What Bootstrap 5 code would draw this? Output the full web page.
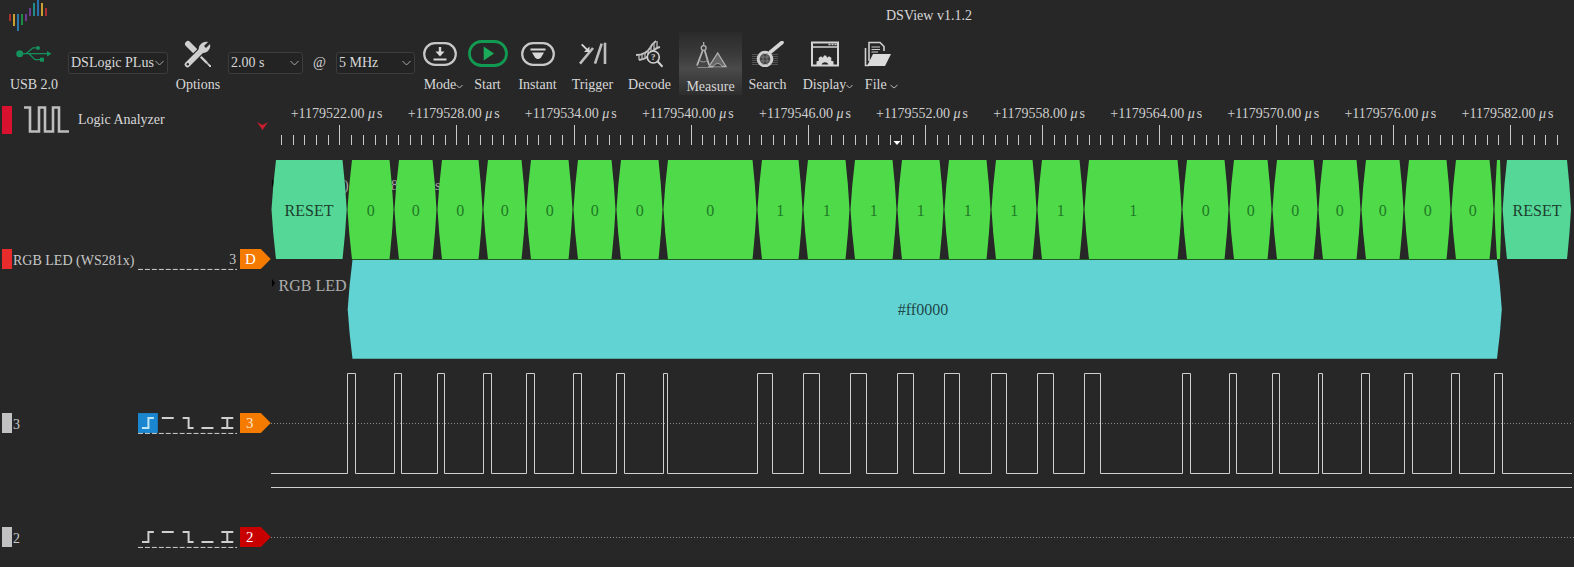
<!DOCTYPE html>
<html>
<head>
    <meta charset="UTF-8">
    <title>DSView v1.1.2</title>
    <link href="https://cdn.jsdelivr.net/npm/bootstrap@5.3.0/dist/css/bootstrap.min.css" rel="stylesheet">
    <style>
        html, body { height: 100%; }
        body {
            background: #272727;
            color: #d8d8d8;
            font-family: "Liberation Serif", serif;
            font-size: 14px;
            overflow: hidden;
        }
        svg { display: block; }
        .title-row { height: 30px; }
        .app-title { margin-left: 838px; line-height: 32px; }

        .tool-row {
            display: grid;
            grid-template-columns: 68px 100px 60px 75px 33px 79px 50px 45px 55px 55px 59px 63px 51px 63px 44px;
            height: 68px;
        }
        .tool { display: flex; flex-direction: column; align-items: center; }
        .tool-ic { height: 47px; display: flex; align-items: center; justify-content: center; }
        .tool-lb { line-height: 16px; white-space: nowrap; display: flex; align-items: center; }
        .tool-on { background: linear-gradient(#2b2b2b 0%, #3a3a3a 35%, #4a4a4a 58%, #2d2d2d 100%); margin: 2px 0 5px; }
        .tool-on .tool-ic { height: 45px; }
        .tool-on .tool-lb { margin-top: 2px; }
        .chev { margin-top: 3px; margin-right: -7px; }

        .pick-cell { padding-top: 22px; }
        .pick-cell .form-select {
            height: 22px;
            min-height: 0;
            padding: 0 12px 0 2px;
            font-size: 14px;
            line-height: 20px;
            color: #d8d8d8;
            background-color: #232323;
            background-image: url("data:image/svg+xml,%3csvg xmlns='http://www.w3.org/2000/svg' viewBox='0 0 9 6'%3e%3cpath fill='none' stroke='%23aaa' d='M.5 1l4 4 4-4'/%3e%3c/svg%3e");
            background-position: right 3px center;
            background-size: 9px 6px;
            border: 1px solid #3c3c3c;
            border-radius: 3px;
            box-shadow: none;
        }
        .at-sign { padding-top: 22px; line-height: 22px; text-align: center; }

        .main-row { height: 469px; }
        .side-panel { width: 270px; flex: none; }
        .head-row { margin-top: 8px; height: 28px; }
        .mark-bar { width: 10px; margin-left: 2px; flex: none; }
        .mark-head { height: 28px; background: #d8112f; }
        .mark-rgb { height: 20px; background: #e82c2c; }
        .mark-ch { height: 20px; background: #c2c2c2; }
        .head-wave { margin-left: 12px; }
        .head-name { margin-left: 9px; margin-top: -1px; }
        .head-arrow { margin-left: auto; margin-right: 2px; margin-top: 16px; }
        .chan-row { height: 21px; }
        .chan-rgb { margin-top: 115px; }
        .chan-3 { margin-top: 143px; }
        .chan-2 { margin-top: 93px; }
        .chan-name { width: 126px; padding-left: 1px; padding-top: 2px; line-height: 20px; white-space: nowrap; color: #c8c8c8; flex: none; }
        .chan-tag { margin-left: 3px; margin-right: -1px; }
        .wave-box { flex: 1 1 auto; min-width: 0; }
    </style>
</head>
<body>
    <div class="container-fluid p-0">
        <!-- barra de titulo -->
        <div class="title-row d-flex">
            <svg width="48" height="31" viewBox="0 0 48 31">
                <g stroke-width="2">
                    <path d="M10 14V21" stroke="#a82f2f"/>
                    <path d="M14 14V26" stroke="#c9a032"/>
                    <path d="M18 14V31" stroke="#2a78ad"/>
                    <path d="M22 14V25" stroke="#1d8a45"/>
                    <path d="M26 14V21" stroke="#6b3c92"/>
                    <path d="M30 8V16" stroke="#6b3c92"/>
                    <path d="M34 3V16" stroke="#1f8b8b"/>
                    <path d="M38 0V16" stroke="#2a70b0"/>
                    <path d="M42 3V16" stroke="#c9a032"/>
                    <path d="M46 8V16" stroke="#a83030"/>
                </g>
            </svg>
            <div class="app-title">DSView v1.1.2</div>
        </div>

        <!-- barra de ferramentas -->
        <div class="tool-row">
            <div class="tool">
                <div class="tool-ic">
                    <svg width="38" height="20" viewBox="17 43 38 20">
                        <circle cx="21.7" cy="52.7" r="3.5" fill="#14915c"/>
                        <path d="M22 52.7H50M28 52.7L35 46.8H38M31 52.7L37 58.7H42" fill="none" stroke="#14915c" stroke-width="1.3"/>
                        <path d="M49 50L53.5 52.7L49 55.4Z" fill="#14915c"/>
                        <circle cx="40" cy="47" r="2" fill="#14915c"/>
                        <rect x="42" y="56.7" width="4" height="4" fill="#14915c"/>
                    </svg>
                </div>
                <div class="tool-lb">USB 2.0</div>
            </div>
            <div class="pick-cell">
                <select class="form-select"><option>DSLogic PLus</option></select>
            </div>
            <div class="tool">
                <div class="tool-ic">
                    <svg width="28" height="28" viewBox="0 0 28 28">
                        <path d="M4 4L10.5 10.5" stroke="#cfcfcf" stroke-width="6" stroke-linecap="round"/>
                        <path d="M9 9L23 23" stroke="#cfcfcf" stroke-width="2.4"/>
                        <path d="M21.5 21.5L26 27L27 26Z" fill="#cfcfcf" stroke="#cfcfcf"/>
                        <path d="M3 25L17.5 10.5" stroke="#272727" stroke-width="8"/>
                        <path d="M3.5 24.5L18 10" stroke="#cfcfcf" stroke-width="5.5" stroke-linecap="round"/>
                        <path d="M15 11.5C13.5 6 18 1 24 2L20 6L22 8L26 4C27.5 10 21.5 14.5 16.5 12.5Z" fill="#cfcfcf"/>
                        <circle cx="3.8" cy="24.2" r="1.2" fill="#272727"/>
                    </svg>
                </div>
                <div class="tool-lb">Options</div>
            </div>
            <div class="pick-cell">
                <select class="form-select"><option>2.00 s</option></select>
            </div>
            <div class="at-sign">@</div>
            <div class="pick-cell">
                <select class="form-select"><option>5 MHz</option></select>
            </div>
            <div class="tool">
                <div class="tool-ic">
                    <svg width="34" height="24" viewBox="0 0 34 24">
                        <rect x="1.2" y="1.2" width="31.6" height="21.6" rx="10.8" fill="none" stroke="#c8c8c8" stroke-width="2.2"/>
                        <path d="M17 5V11" stroke="#d8d8d8" stroke-width="2.4"/>
                        <path d="M12.5 9.5H21.5L17 14.5Z" fill="#d8d8d8"/>
                        <path d="M10.5 17.5H23.5" stroke="#d8d8d8" stroke-width="2"/>
                    </svg>
                </div>
                <div class="tool-lb">Mode<svg class="chev" width="7" height="5" viewBox="0 0 7 5"><path d="M.5 1L3.5 4L6.5 1" fill="none" stroke="#bbb"/></svg></div>
            </div>
            <div class="tool">
                <div class="tool-ic">
                    <svg width="40" height="27" viewBox="0 0 40 27">
                        <rect x="1.5" y="1.5" width="37" height="24" rx="12" fill="none" stroke="#139a52" stroke-width="2.8"/>
                        <path d="M15.7 6.5L26 13.5L15.7 20.5Z" fill="#1bab5b"/>
                    </svg>
                </div>
                <div class="tool-lb">Start</div>
            </div>
            <div class="tool">
                <div class="tool-ic">
                    <svg width="34" height="24" viewBox="0 0 34 24">
                        <rect x="1.2" y="1.2" width="31.6" height="21.6" rx="10.8" fill="none" stroke="#c8c8c8" stroke-width="2.2"/>
                        <path d="M9.5 6.5H24.5V8.5H9.5Z" fill="#d8d8d8"/>
                        <path d="M11 10.5H23L20 15.5Q17 18.5 14 15.5Z" fill="#d8d8d8"/>
                    </svg>
                </div>
                <div class="tool-lb">Instant</div>
            </div>
            <div class="tool">
                <div class="tool-ic">
                    <svg width="30" height="24" viewBox="578 41 30 24">
                        <path d="M580 62.7L593 47M595 62.7L601.7 42.7" stroke="#bdbdbd" stroke-width="2.6" fill="none"/>
                        <path d="M605 41.7V63" stroke="#bdbdbd" stroke-width="2.6"/>
                        <path d="M581.7 43.3L587 48.6" stroke="#d8d8d8" stroke-width="1.8"/>
                        <path d="M589.5 45.5V51H584Z" fill="#d8d8d8"/>
                    </svg>
                </div>
                <div class="tool-lb">Trigger</div>
            </div>
            <div class="tool">
                <div class="tool-ic">
                    <svg width="30" height="28" viewBox="636 39 30 28">
                        <path d="M637 54Q647 54 651 47Q653 43 657 40" fill="none" stroke="#c4c4c4" stroke-width="1.8"/>
                        <path d="M640 59Q648 58 652 52Q656 47 661 46" fill="none" stroke="#c4c4c4" stroke-width="1.8"/>
                        <path d="M640 54V59M643 53.5V59M646 52V58M649 49V56M652 46V52M655 42V48M658 40V46" stroke="#b0b0b0" stroke-width="1.4"/>
                        <circle cx="654.3" cy="56" r="6" fill="#272727" stroke="#d2d2d2" stroke-width="1.6"/>
                        <path d="M658.7 60.5L663.5 65.7" stroke="#d2d2d2" stroke-width="2"/>
                        <text x="654.3" y="59" text-anchor="middle" font-size="9" font-weight="700" fill="#d2d2d2">?</text>
                    </svg>
                </div>
                <div class="tool-lb">Decode</div>
            </div>
            <div class="tool tool-on">
                <div class="tool-ic">
                    <svg width="32" height="30" viewBox="694 39 32 30">
                        <path d="M702.7 41V45" stroke="#b5b5b5" stroke-width="1.2"/>
                        <circle cx="702.7" cy="47" r="2.4" fill="none" stroke="#b5b5b5" stroke-width="1.3"/>
                        <path d="M701.7 49.5L696 64.5M703.7 49.5L708 64" stroke="#b5b5b5" stroke-width="1.8" fill="none"/>
                        <path d="M698 59Q702 63 707 59" stroke="#a0a0a0" fill="none"/>
                        <path d="M708 65.5L716.7 52L725 65.5Z" fill="#666" stroke="#b0b0b0" stroke-width="1.3"/>
                        <path d="M712.5 65.5A4.5 4.5 0 0 1 721 65.5" fill="#3c3c3c" stroke="#a8a8a8"/>
                        <path d="M696.5 66.5H712" stroke="#8a8a8a"/>
                    </svg>
                </div>
                <div class="tool-lb">Measure</div>
            </div>
            <div class="tool">
                <div class="tool-ic">
                    <svg width="32" height="26" viewBox="752 40 32 26">
                        <g stroke="#7c7c7c" stroke-width="1" stroke-dasharray="1 1">
                            <path d="M752.5 53.5H778M752.5 55.5H778M752.5 57.5H778M752.5 59.5H778M752.5 61.5H778M752.5 63.5H778"/>
                        </g>
                        <path d="M770.5 51L782 41.5" stroke="#d4d4d4" stroke-width="3.6" stroke-linecap="round"/>
                        <circle cx="765" cy="58" r="6.8" fill="#444" stroke="#d0d0d0" stroke-width="3"/>
                        <path d="M760 56H770M760 60H770M763 52V64M767 52V64" stroke="#808080" stroke-width=".8"/>
                    </svg>
                </div>
                <div class="tool-lb">Search</div>
            </div>
            <div class="tool">
                <div class="tool-ic">
                    <svg width="30" height="26" viewBox="809 40 30 26">
                        <rect x="811" y="41.5" width="26" height="23" fill="none" stroke="#d4d4d4" stroke-width="2"/>
                        <path d="M811 46H837" stroke="#d4d4d4" stroke-width="1.5"/>
                        <path d="M827.5 43.5H829.5M830.5 43.5H832.5M833.5 43.5H835.5" stroke="#d4d4d4" stroke-width="1.6"/>
                        <path d="M815.5 64V60.5L818 59.5L817.5 57L820 55.2L821.8 56.8L823 54.5H825L826.2 56.8L828 55.2L830.5 57L830 59.5L832.5 60.5V64H827.5A3.6 3.6 0 0 0 820.5 64Z" fill="#d8d8d8"/>
                    </svg>
                </div>
                <div class="tool-lb">Display<svg class="chev" width="7" height="5" viewBox="0 0 7 5"><path d="M.5 1L3.5 4L6.5 1" fill="none" stroke="#bbb"/></svg></div>
            </div>
            <div class="tool">
                <div class="tool-ic">
                    <svg width="28" height="26" viewBox="862 40 28 26">
                        <path d="M867 60V41.5H878L882 45.5V50" fill="none" stroke="#cfcfcf" stroke-width="1.6"/>
                        <path d="M869.5 46H878M869.5 48.5H878M869.5 51H876" stroke="#cfcfcf" stroke-width="1.2"/>
                        <path d="M863.5 47V64.5H867" fill="none" stroke="#cfcfcf" stroke-width="1.6"/>
                        <path d="M871 53H889L883 65H865Z" fill="#dcdcdc"/>
                    </svg>
                </div>
                <div class="tool-lb">File&nbsp;<svg class="chev" width="8" height="5" viewBox="0 0 8 5"><path d="M.5 1L4 4L7.5 1" fill="none" stroke="#bbb"/></svg></div>
            </div>
        </div>

        <div class="main-row d-flex">
            <!-- painel de canais -->
            <div class="side-panel">
                <div class="head-row d-flex">
                    <div class="mark-bar mark-head"></div>
                    <svg class="head-wave" width="45" height="27" viewBox="0 0 45 27">
                        <path d="M0 1.5H6V25.5H15V1.5H21V25.5H29V1.5H35V25.5H45" fill="none" stroke="#bdbdbd" stroke-width="2.6"/>
                    </svg>
                    <div class="head-name align-self-center">Logic Analyzer</div>
                    <svg class="head-arrow" width="11" height="8" viewBox="0 0 11 8"><path d="M0 0L5.5 3L11 0L5.5 8Z" fill="#c81e2e"/></svg>
                </div>

                <div class="chan-row chan-rgb d-flex">
                    <div class="mark-bar mark-rgb"></div>
                    <div class="chan-name">RGB LED (WS281x)</div>
                    <svg width="100" height="21" viewBox="0 0 100 21">
                        <text x="99" y="15" text-anchor="end" font-size="14" fill="#c8c8c8">3</text>
                        <path d="M0 20.5H100" stroke="#d0d0d0" stroke-dasharray="5 2"/>
                    </svg>
                    <svg class="chan-tag" width="31" height="20" viewBox="0 0 31 20">
                        <path d="M0 0H21L31 10L21 20H0Z" fill="#f47a00"/>
                        <text x="5" y="15.5" font-size="15" fill="#fff">D</text>
                    </svg>
                </div>

                <div class="chan-row chan-3 d-flex">
                    <div class="mark-bar mark-ch"></div>
                    <div class="chan-name">3</div>
                    <svg width="100" height="21" viewBox="138 413 100 21">
                        <rect x="138" y="413" width="20" height="20" fill="#1a86d0"/>
                        <path d="M142 428H148.5V418H154" fill="none" stroke="#bfe6f5" stroke-width="2"/>
                        <path d="M162 418H174M183 418H189V428H194M202 428H214M222 418H234M222 428H234M228 418V428" fill="none" stroke="#cfcfcf" stroke-width="2"/>
                        <path d="M138 433.5H238" stroke="#d0d0d0" stroke-dasharray="5 2"/>
                    </svg>
                    <svg class="chan-tag" width="31" height="20" viewBox="0 0 31 20">
                        <path d="M0 0H21L31 10L21 20H0Z" fill="#f47a00"/>
                        <text x="6" y="15.5" font-size="15" fill="#ffe9c8">3</text>
                    </svg>
                </div>

                <div class="chan-row chan-2 d-flex">
                    <div class="mark-bar mark-ch"></div>
                    <div class="chan-name">2</div>
                    <svg width="100" height="21" viewBox="138 527 100 21">
                        <path d="M142 542H148.5V532H154M162 532H174M183 532H189V542H194M202 542H214M222 532H234M222 542H234M228 532V542" fill="none" stroke="#cfcfcf" stroke-width="2"/>
                        <path d="M138 547.5H238" stroke="#d0d0d0" stroke-dasharray="5 2"/>
                    </svg>
                    <svg class="chan-tag" width="31" height="20" viewBox="0 0 31 20">
                        <path d="M0 0H21L31 10L21 20H0Z" fill="#c80000"/>
                        <text x="6" y="15.5" font-size="15" fill="#fff">2</text>
                    </svg>
                </div>
            </div>

            <!-- regua, decoder e formas de onda -->
            <div class="wave-box">
                <svg id="wave" width="1304" height="469" viewBox="270 98 1304 469"></svg>
            </div>
        </div>
    </div>

    <script src="https://cdn.jsdelivr.net/npm/bootstrap@5.3.0/dist/js/bootstrap.bundle.min.js"></script>
    <script>
        // flancos de subida e descida do canal 3
        const pulses = [
            [347.5, 355.5], [394.5, 401.5], [437.5, 444.5], [483.5, 491.5],
            [526.5, 534.5], [573.5, 581.5], [616.5, 624.5], [663.5, 667.5],
            [757.5, 772.5], [803.5, 819.5], [850.5, 866.5], [897.5, 913.5],
            [944.5, 959.5], [991.5, 1006.5], [1037.5, 1053.5], [1084.5, 1100.5],
            [1182.5, 1190.5], [1229.5, 1236.5], [1272.5, 1279.5], [1318.5, 1322.5],
            [1361.5, 1369.5], [1404.5, 1412.5], [1451.5, 1459.5], [1494.5, 1502.5]
        ];
        const bits = '000000001111111100000000';

        // hexagono com lados levemente curvos
        function hexPath(fl, fr, tl, tr, top, bottom) {
            const mid = (top + bottom) / 2;
            const q = (bottom - top) / 4;
            const cl = fl + (tl - fl) * 0.68;
            const cr = fr + (tr - fr) * 0.68;
            return `M${fl} ${top}H${fr}Q${cr} ${top + q} ${tr} ${mid}Q${cr} ${bottom - q} ${fr} ${bottom}H${fl}Q${cl} ${bottom - q} ${tl} ${mid}Q${cl} ${top + q} ${fl} ${top}Z`;
        }

        let out = '';

        // regua de tempo
        const step = 117.08;
        for (let i = -1; i < 12; i++) {
            const major = 339.4 + i * step;
            for (let j = 0; j < 10; j++) {
                const x = Math.round(major + j * step / 10) + 0.5;
                if (x < 271 || x > 1569) continue;
                out += `<path d="M${x} ${j === 0 ? 125 : 135}V145" stroke="#c8c8c8"/>`;
            }
            if (i >= 0 && i <= 10) {
                out += `<text x="${major - 48.7}" y="118" font-size="14" fill="#cfcfcf">+${1179522 + i * 6}.00 <tspan font-style="italic">μ</tspan><tspan dx="2">s</tspan></text>`;
            }
        }
        out += '<path d="M893.5 141H900.5L897 145Z" fill="#fff"/>';

        // rotulo escondido atras dos bits
        out += '<path d="M272 179L275 183L272 187Z" fill="#000"/>';
        out += '<text x="344" y="190" font-size="14" fill="#aaa">)</text><text x="391" y="190" font-size="14" fill="#aaa">8</text><text x="435" y="190" font-size="14" fill="#aaa">s</text>';

        // bits do decoder
        out += `<path d="${hexPath(276, 342.5, 271.5, 346.7, 160, 259)}" fill="#55d897"/>`;
        out += '<text x="309" y="215.5" text-anchor="middle" font-size="16" fill="#1c3f2e">RESET</text>';
        pulses.forEach((p, i) => {
            const r = p[0];
            const next = i + 1 < pulses.length ? pulses[i + 1][0] : 1502.5;
            const thin = next - r < 12;
            const fl = thin ? r + 2.5 : r + 4.5;
            const fr = thin ? next - 2.5 : next - 5;
            out += `<path d="${hexPath(fl, fr, r, next - 1, 160, 259)}" fill="#4fdb49"/>`;
            if (!thin) {
                out += `<text x="${(fl + fr) / 2}" y="215.5" text-anchor="middle" font-size="16" fill="#1e7a24">${bits[i]}</text>`;
            }
        });
        out += `<path d="${hexPath(1507, 1567, 1502.7, 1571, 160, 259)}" fill="#55d897"/>`;
        out += '<text x="1537" y="215.5" text-anchor="middle" font-size="16" fill="#1c3f2e">RESET</text>';
        out += '<path d="M352 259.5H1497" stroke="#1f5c24"/>';

        // linha RGB
        out += '<path d="M272 279L275 283L272 287Z" fill="#000"/>';
        out += '<text x="278.5" y="291" font-size="16" fill="#adadad">RGB LED</text>';
        out += `<path d="${hexPath(352.5, 1497, 347.7, 1501.8, 260, 358.7)}" fill="#62d3d3"/>`;
        out += '<text x="923" y="315" text-anchor="middle" font-size="16" fill="#1f4a4a">#ff0000</text>';

        // linhas pontilhadas dos canais
        out += '<path d="M271 423.5H1572M271 537.5H1574" stroke="#8a8a8a" stroke-dasharray="1 2"/>';

        // forma de onda do canal 3
        let d = 'M271 473.5';
        pulses.forEach(p => {
            d += `H${p[0]}V373.5H${p[1]}V473.5`;
        });
        d += 'H1572';
        out += `<path d="${d}" fill="none" stroke="#cfcfcf"/>`;
        out += '<path d="M271 487.5H1572" stroke="#cfcfcf"/>';

        document.getElementById('wave').innerHTML = out;
    </script>
</body>
</html>
